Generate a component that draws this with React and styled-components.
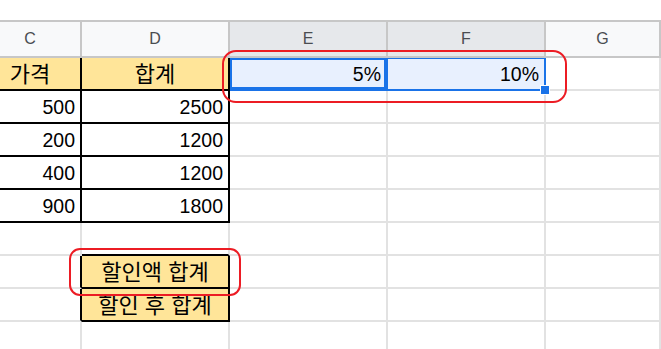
import React from 'react'
import styled, { createGlobalStyle } from 'styled-components'

const GlobalStyle = createGlobalStyle`
  html, body {
    margin: 0;
    padding: 0;
    background: #fff;
  }
  body {
    font-family: 'Liberation Sans', 'Noto Sans CJK KR', Arial, sans-serif;
  }
`

const GRID = '#e2e2e2'
const INK = '#000'
const BLUE = '#1a73e8'
const YELLOW = '#ffe599'

const Sheet = styled.div`
  position: relative;
  width: 661px;
  height: 349px;
  overflow: hidden;
  padding-top: 20px;
  box-sizing: border-box;
`

const Grid = styled.div`
  display: grid;
  grid-template-columns: 82px 148px 158px 158px 1fr;
  grid-template-rows: 38px repeat(9, 33px);
`

const ColHead = styled.div`
  display: flex;
  align-items: center;
  justify-content: center;
  box-sizing: border-box;
  padding-right: ${p => p.$shift || 0}px;
  background: ${p => (p.$selected ? '#e6e8eb' : '#f8f9fa')};
  border-top: 2px solid #c7c7c7;
  border-bottom: 2px solid #c7c7c7;
  border-right: 2px solid #c7c7c7;
  color: #4a4d51;
  font-size: 16px;
`

const Cell = styled.div`
  position: relative;
  z-index: ${p => (p.$raised ? 2 : 'auto')};
  display: flex;
  align-items: center;
  justify-content: ${p => (p.$right ? 'flex-end' : 'center')};
  box-sizing: border-box;
  padding-top: 2px;
  padding-right: ${p => (p.$right ? 5 : p.$shift || 0)}px;
  background: ${p => p.$bg || '#fff'};
  border-right: 2px solid ${p => (p.$rb ? INK : p.$line || GRID)};
  border-bottom: 2px solid ${p => (p.$bb ? INK : p.$line || GRID)};
  box-shadow: ${p => p.$frame || 'none'};
  font-size: ${p => (p.$ko ? 22 : 19.5)}px;
  line-height: 1;
  color: #000;
  white-space: nowrap;
`

const Handle = styled.span`
  position: absolute;
  right: -6px;
  bottom: -6px;
  width: 8px;
  height: 8px;
  background: ${BLUE};
  border: 1px solid #fff;
`

// red marker rings drawn over the sheet
const Ring = styled.div`
  position: absolute;
  z-index: 5;
  left: ${p => p.$x}px;
  top: ${p => p.$y}px;
  width: ${p => p.$w}px;
  height: ${p => p.$h}px;
  box-sizing: border-box;
  border: 2px solid #ec1c24;
  border-radius: ${p => p.$r}px;
  pointer-events: none;
`

const columns = [
  { key: 'C', shift: 20 },
  { key: 'D' },
  { key: 'E', selected: true },
  { key: 'F', selected: true },
  { key: 'G' },
]

const prices = [
  ['500', '2500'],
  ['200', '1200'],
  ['400', '1200'],
  ['900', '1800'],
]

const blank = n => Array.from({ length: n }, (_, i) => <Cell key={'b' + i} />)

export default function App() {
  return (
    <Sheet>
      <GlobalStyle />
      <Grid>
        {columns.map(c => (
          <ColHead key={c.key} $shift={c.shift} $selected={c.selected}>
            {c.key}
          </ColHead>
        ))}

        <Cell $ko $bg={YELLOW} $rb $bb $shift={20}>가격</Cell>
        <Cell $ko $bg={YELLOW} $rb $bb>합계</Cell>
        <Cell $right $bg="#e8f0fe" $line={BLUE} $frame={`inset 0 0 0 2px ${BLUE}`}>5%</Cell>
        <Cell $right $raised $bg="#e8f0fe" $line={BLUE} $frame={`inset 0 1px 0 ${BLUE}`}>
          10%
          <Handle />
        </Cell>
        <Cell />

        {prices.map(([price, total]) => (
          <React.Fragment key={price}>
            <Cell $right $rb $bb>{price}</Cell>
            <Cell $right $rb $bb>{total}</Cell>
            {blank(3)}
          </React.Fragment>
        ))}

        <Cell />
        <Cell $bb />
        {blank(3)}

        <Cell $rb />
        <Cell $ko $bg={YELLOW} $rb $bb>할인액 합계</Cell>
        {blank(3)}

        <Cell $rb />
        <Cell $ko $bg={YELLOW} $rb $bb>할인 후 합계</Cell>
        {blank(3)}

        {blank(5)}
      </Grid>

      <Ring $x={222} $y={50} $w={345} $h={53} $r={14} />
      <Ring $x={69} $y={248} $w={172} $h={48} $r={11} />
    </Sheet>
  )
}
